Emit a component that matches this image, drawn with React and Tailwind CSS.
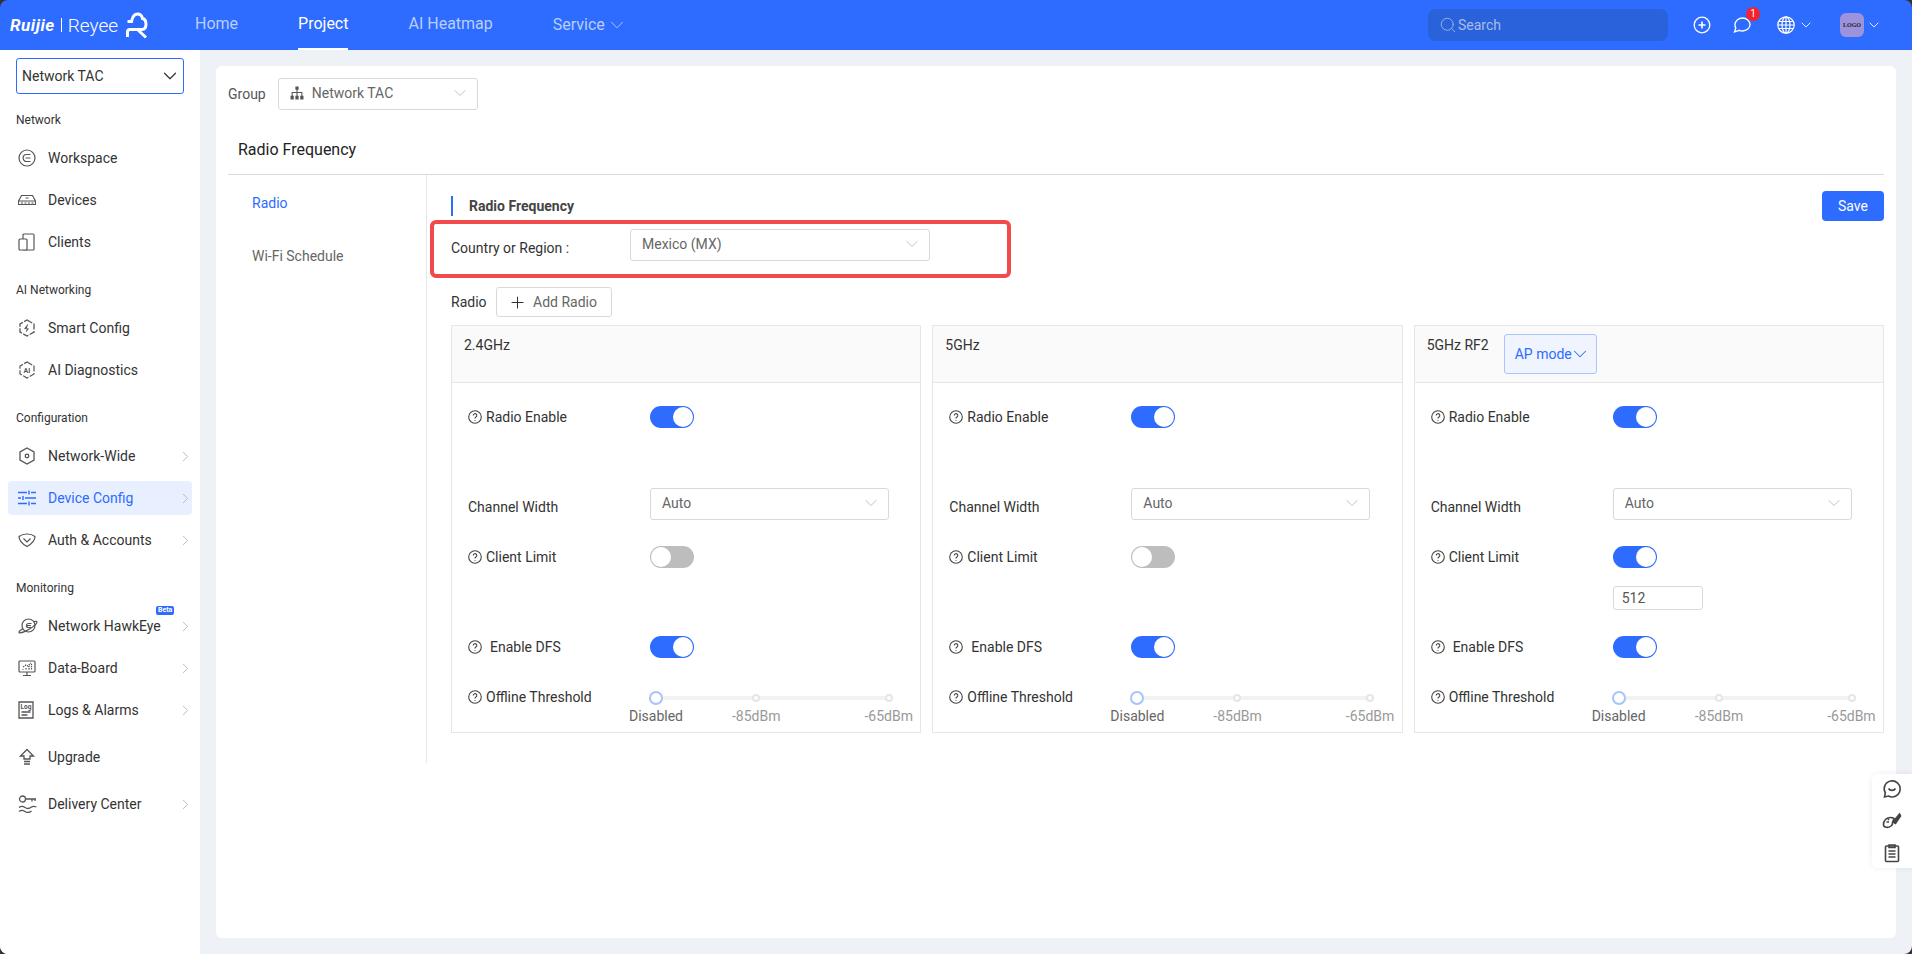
import { ChevronDown, ChevronRight, Plus, Search } from "lucide-react";

const font = "font-['Roboto','Liberation_Sans',sans-serif]";

const WorkspaceIcon = () => (
  <svg width="18" height="18" viewBox="0 0 18 18" fill="none" stroke="#555" strokeWidth="1.2">
    <circle cx="9" cy="9" r="8" />
    <path d="M12.5 5.5H8.6a3.5 3.5 0 0 0 0 7h3.9M7.5 9h5" />
  </svg>
);
const DevicesIcon = () => (
  <svg width="18" height="18" viewBox="0 0 18 18" fill="none" stroke="#555" strokeWidth="1.2">
    <path d="M3.5 4.5h11l3 5.5v3.5H.5V10z" />
    <path d="M.5 10h17M3 12h2M6.5 12h2M10 12h2M13.5 12h2M7.5 7h3" />
  </svg>
);
const ClientsIcon = () => (
  <svg width="18" height="18" viewBox="0 0 18 18" fill="none" stroke="#555" strokeWidth="1.2">
    <rect x="5" y="1" width="11" height="16" rx="1" />
    <rect x="1" y="6" width="8" height="11" rx="1" fill="#fff" />
    <path d="M5 14.5h.1M12 14.5h.1" />
  </svg>
);
const BoltIcon = () => (
  <svg width="18" height="18" viewBox="0 0 18 18" fill="none" stroke="#555" strokeWidth="1.3">
    <path d="M9 1l7 4v8l-7 4-7-4V5z" strokeDasharray="6 1.5" />
    <path d="M10 5L6.5 9.7h4L8 13" fill="#555" strokeWidth=".6" />
  </svg>
);
const AiIcon = () => (
  <svg width="18" height="18" viewBox="0 0 18 18" fill="none" stroke="#555" strokeWidth="1.2">
    <path d="M9 1l7 4v8l-7 4-7-4V5z" strokeDasharray="6 1.5" />
    <text x="9" y="11.7" textAnchor="middle" fontSize="7" fontWeight="700" fill="#555" stroke="none" fontFamily="Roboto">AI</text>
  </svg>
);
const HexIcon = () => (
  <svg width="18" height="18" viewBox="0 0 18 18" fill="none" stroke="#555" strokeWidth="1.3">
    <path d="M9 1l7 4v8l-7 4-7-4V5z" />
    <circle cx="9" cy="9" r="1.8" />
  </svg>
);
const SlidersIcon = () => (
  <svg width="18" height="18" viewBox="0 0 18 18" fill="none" stroke="#2e6bff" strokeWidth="1.4">
    <path d="M0 3.5h9M13 3.5h5M0 9h3M7 9h11M0 14.5h9M13 14.5h5" />
    <path d="M11 1.5v4M5 7v4M11 12.5v4" />
  </svg>
);
const ShieldIcon = () => (
  <svg width="18" height="18" viewBox="0 0 18 18" fill="none" stroke="#555" strokeWidth="1.2">
    <path d="M1 5.5C3.5 3.5 6 3 9 3s5.500.5 8 2.500c0 4-3.500 7.500-8 10-4.500-2.500-8-6-8-10z" />
    <path d="M5.500 7.500 9 11l3.500-3.500" />
  </svg>
);
const HawkIcon = () => (
  <svg width="20" height="18" viewBox="0 0 20 18" fill="none" stroke="#555" strokeWidth="1.2">
    <circle cx="10.500" cy="8.500" r="6.500" />
    <path d="M5 11.500C2 13.500.500 14.800 1 15.500c1 1 6-.700 10.500-3.500 4-2.500 7.500-5.500 7.500-7 0-.700-1-.900-3-.500" />
    <path d="M13.500 6.500h-3a2 2 0 0 0 0 4h3M9 8.500h4" />
  </svg>
);
const BoardIcon = () => (
  <svg width="18" height="18" viewBox="0 0 18 18" fill="none" stroke="#555" strokeWidth="1.2">
    <rect x="1" y="2" width="16" height="11" rx="1" />
    <path d="M9 13v3M5 16.500h8" />
    <path d="M4.500 10.500h1M8 10.500V8.500M11 10.500V7M13.500 10.500V5M5 8l3-2 2 1 3-3" strokeDasharray="1.500 .8" />
  </svg>
);
const LogIcon = () => (
  <svg width="16" height="18" viewBox="0 0 16 18" fill="none" stroke="#555" strokeWidth="1.300">
    <path d="M1 1h14v16H1z" />
    <text x="8" y="8" textAnchor="middle" fontSize="6.500" fontWeight="700" fill="#555" stroke="none" fontFamily="Roboto">Log</text>
    <path d="M3.500 11h9M3.500 14h6" />
  </svg>
);
const UpgradeIcon = () => (
  <svg width="18" height="18" viewBox="0 0 18 18" fill="none" stroke="#555" strokeWidth="1.300">
    <path d="M9 1.500l6.500 6.500H12v3H6V8H2.500z" />
    <path d="M6 13.500h6M6 16h6" />
  </svg>
);
const KeyIcon = () => (
  <svg width="20" height="18" viewBox="0 0 20 18" fill="none" stroke="#555" strokeWidth="1.300">
    <circle cx="4.500" cy="4" r="3" />
    <path d="M7.500 4H18M14 4v2.500M17 4v2" />
    <path d="M1 12.500c2-1.500 4-1.500 6 0s4.500 1 6.500-.5 3.500-.5 5 0M1 16.500c2-1.500 4-1.500 6 0s4.500 1 6.500-.5" />
  </svg>
);

const NavItem = ({ icon, label, arrow, active, badge }) => (
  <div className={`relative flex h-[34px] items-center rounded pl-[10px] text-[14px] ${active ? "bg-[#e8f0ff] text-[#2e6bff]" : "text-[#333]"}`}>
    <span className="flex w-[30px] shrink-0 items-center">{icon}</span>
    <span className="flex-1">{label}</span>
    {badge && (
      <span className="absolute left-[148px] top-[-3px] rounded-[2px] bg-[#2e6bff] px-[2px] text-[7px] leading-[9px] font-bold text-white">Beta</span>
    )}
    {arrow && <ChevronRight className="mr-[-2px]" size={17} color="#b5b5b5" strokeWidth={1.300} />}
  </div>
);

const groups = [
  {
    title: "Network",
    items: [
      { icon: <WorkspaceIcon />, label: "Workspace" },
      { icon: <DevicesIcon />, label: "Devices" },
      { icon: <ClientsIcon />, label: "Clients" },
    ],
  },
  {
    title: "AI Networking",
    items: [
      { icon: <BoltIcon />, label: "Smart Config" },
      { icon: <AiIcon />, label: "AI Diagnostics" },
    ],
  },
  {
    title: "Configuration",
    items: [
      { icon: <HexIcon />, label: "Network-Wide", arrow: true },
      { icon: <SlidersIcon />, label: "Device Config", arrow: true, active: true },
      { icon: <ShieldIcon />, label: "Auth & Accounts", arrow: true },
    ],
  },
  {
    title: "Monitoring",
    items: [
      { icon: <HawkIcon />, label: "Network HawkEye", arrow: true, badge: true },
      { icon: <BoardIcon />, label: "Data-Board", arrow: true },
      { icon: <LogIcon />, label: "Logs & Alarms", arrow: true },
    ],
  },
];

const Sidebar = () => (
  <aside className="w-[200px] shrink-0 bg-white px-[8px] pt-[8px]">
    <div className="mx-[8px] flex h-[36px] items-center justify-between rounded-[3px] border border-[#2e6bff] pl-[5px] pr-[2px] text-[14px] text-[#333]">
      Network TAC
      <ChevronDown size={22} color="#333" strokeWidth={1.300} />
    </div>
    <div className="mt-[15px] flex flex-col gap-[20px]">
      {groups.map((g) => (
        <div key={g.title}>
          <div className="mb-[12px] h-[20px] pl-[8px] text-[12px] leading-[22px] text-[#333]">{g.title}</div>
          <div className="flex flex-col gap-[8px]">
            {g.items.map((it) => (
              <NavItem key={it.label} {...it} />
            ))}
          </div>
        </div>
      ))}
      <div className="mt-[-7px] flex flex-col gap-[13px]">
        <NavItem icon={<UpgradeIcon />} label="Upgrade" />
        <NavItem icon={<KeyIcon />} label="Delivery Center" arrow />
      </div>
    </div>
  </aside>
);

const TopBar = () => (
  <header className="flex h-[50px] shrink-0 items-center bg-[#2e6bff] pl-[10px] pr-[30px]">
    <div className="flex w-[185px] items-center text-white">
      <span className="text-[17px] leading-none font-bold tracking-[0.5px] italic">Ruijie</span>
      <span className="ml-[6px] mr-[6px] h-[14px] w-px bg-white" />
      <span className="text-[19px] leading-none font-light">Reyee</span>
      <svg className="ml-[8px]" width="22" height="27" viewBox="0 0 22 27" fill="none" stroke="#fff" strokeWidth="3">
        <path d="M1.500 9.500H5.500C6.500 4.500 9 2 11.500 2c3 0 4.500 2 5 4.500 2 .5 3.500 2.500 3.500 5.500 0 3.500-1.500 5.500-4 5.500H4a2.500 2.500 0 0 0-2.500 2.500v5M12 18l8 7.500" />
      </svg>
    </div>
    <nav className="flex h-full text-[16px] text-[#b9cffc]">
      <span className="flex items-center pb-[2px]">Home</span>
      <span className="ml-[60px] flex items-center border-b-2 border-white text-white">Project</span>
      <span className="ml-[60px] flex items-center pb-[2px]">AI Heatmap</span>
      <span className="ml-[60px] flex items-center gap-[1px]">
        Service
        <ChevronDown size={22} strokeWidth={1} />
      </span>
    </nav>
    <div className="ml-auto flex h-[32px] w-[240px] items-center gap-[1px] rounded-[8px] bg-[#2a62dc] pl-[11px] text-[14px] text-[#a9bce6]">
      <Search size={18} strokeWidth={1.100} />
      Search
    </div>
    <svg className="ml-[25px]" width="18" height="18" viewBox="0 0 18 18" fill="none" stroke="#fff" strokeWidth="1.300">
      <circle cx="9" cy="9" r="7.800" />
      <path d="M9 5.500v7M5.500 9h7" strokeWidth="1.600" />
    </svg>
    <div className="relative ml-[22px] h-[18px] w-[18px]">
      <svg width="18" height="18" viewBox="0 0 18 18" fill="none" stroke="#fff" strokeWidth="1.300">
        <path d="M2 8.500C2 4.900 5.400 2 9.500 2S17 4.900 17 8.500 13.600 15 9.500 15c-1.200 0-2.300-.2-3.300-.7L1.500 16l1.300-4A6 6 0 0 1 2 8.500z" />
      </svg>
      <span className="absolute left-[13px] top-[-9px] flex h-[14px] w-[14px] items-center justify-center rounded-full bg-[#f5222d] text-[10px] leading-none text-white">1</span>
    </div>
    <svg className="ml-[26px]" width="18" height="18" viewBox="0 0 18 18" fill="none" stroke="#fff" strokeWidth="1.200">
      <circle cx="9" cy="9" r="8.200" />
      <ellipse cx="9" cy="9" rx="4" ry="8.200" />
      <path d="M9 .8v16.400M1.800 5.500h14.400M.8 9h16.400M1.800 12.500h14.400" />
    </svg>
    <ChevronDown className="ml-[3px]" size={16} color="#fff" strokeWidth={1.300} />
    <div className="ml-[26px] flex h-[24px] w-[24px] items-center justify-center rounded-[6px] bg-[#9d93dd] font-['Liberation_Serif',serif] text-[6px] font-bold text-[#222]">LOGO</div>
    <ChevronDown className="ml-[2px]" size={16} color="#fff" strokeWidth={1.300} />
  </header>
);

const Help = () => (
  <svg className="shrink-0" width="14" height="14" viewBox="0 0 14 14" fill="none" stroke="#444" strokeWidth="1.100">
    <circle cx="7" cy="7" r="6.300" />
    <path d="M5.200 5.500a1.800 1.800 0 1 1 2.700 1.500c-.6.400-.9.700-.9 1.400" />
    <path d="M7 10v.8" />
  </svg>
);

const Toggle = ({ on }) => (
  <div className={`flex h-[22px] w-[44px] items-center rounded-full ${on ? "justify-end bg-[#2e6bff] pr-[1px]" : "justify-start bg-[#bdbdbd] pl-[1px]"}`}>
    <span className="h-[20px] w-[20px] rounded-full bg-white" />
  </div>
);

const Select = ({ value, className }) => (
  <div className={`flex h-[32px] items-center justify-between rounded-[3px] border border-[#d9d9d9] pb-[2px] pl-[11px] pr-[7px] text-[14px] text-[#666] ${className}`}>
    <span>{value}</span>
    <ChevronDown size={20} color="#b5b5b5" strokeWidth={1} />
  </div>
);

const Row = ({ height, help = true, gap, label, children }) => (
  <div className={`flex pl-[16px] ${height}`}>
    <div className="flex h-[22px] w-[182px] shrink-0 items-center text-[14px] text-[#333]">
      {help && <Help />}
      <span className={gap}>{label}</span>
    </div>
    <div>{children}</div>
  </div>
);

const Slider = () => (
  <div className="relative mt-[10px] ml-[6px] h-[4px] w-[233px] rounded-full bg-[#f2f2f2]">
    <span className="absolute left-[-7px] top-[-5px] h-[14px] w-[14px] rounded-full border-2 border-[#a6c4fb] bg-white" />
    <span className="absolute left-[96px] top-[-2px] h-[8px] w-[8px] rounded-full border-2 border-[#e6e6e6] bg-white" />
    <span className="absolute right-[-4px] top-[-2px] h-[8px] w-[8px] rounded-full border-2 border-[#e6e6e6] bg-white" />
    <span className="absolute left-[-27px] top-[10px] text-[14px] text-[#666]">Disabled</span>
    <span className="absolute left-[76px] top-[10px] text-[14px] text-[#999]">-85dBm</span>
    <span className="absolute right-[-24px] top-[10px] text-[14px] text-[#999]">-65dBm</span>
  </div>
);

const RadioCard = ({ title, apMode, clientOn }) => (
  <div className="h-[408px] border border-[#e6e6e6]">
    <div className="flex h-[57px] gap-[15px] border-b border-[#e6e6e6] bg-[#fafafa] pl-[12px]">
      <span className="pt-[9px] text-[14px] text-[#333]">{title}</span>
      {apMode && (
        <div className="mt-[8px] flex h-[40px] w-[93px] items-center whitespace-nowrap rounded-[3px] border border-[#a9c4ff] bg-[#eff4ff] pl-[10px] text-[14px] text-[#2e6bff]">
          AP mode
          <ChevronDown className="ml-[-3px] shrink-0" size={22} strokeWidth={1.100} />
        </div>
      )}
    </div>
    <div className="pt-[23px]">
      <Row height="h-[82px]" label="Radio Enable" gap="ml-[4px]">
        <Toggle on />
      </Row>
      <Row height="h-[58px]" help={false} label="Channel Width" gap="mt-[16px]">
        <Select value="Auto" className="w-[239px]" />
      </Row>
      <Row height="h-[90px]" label="Client Limit" gap="ml-[4px]">
        <Toggle on={clientOn} />
        {clientOn && (
          <div className="mt-[18px] flex h-[24px] w-[90px] items-center rounded-[3px] border border-[#d9d9d9] pl-[8px] text-[14px] text-[#555]">512</div>
        )}
      </Row>
      <Row height="h-[50px]" label="Enable DFS" gap="ml-[8px]">
        <Toggle on />
      </Row>
      <Row height="h-[46px]" label="Offline Threshold" gap="ml-[4px]">
        <Slider />
      </Row>
    </div>
  </div>
);

export default function App() {
  return (
    <div className={`${font} h-[954px] w-[1912px] bg-[#333]`}>
      <div className="relative flex h-full flex-col overflow-hidden rounded-[8px]">
        <TopBar />
        <div className="flex flex-1 bg-[#eef2f6]">
          <Sidebar />
          <main className="flex-1 p-[16px]">
            <div className="relative h-full rounded-[6px] bg-white px-[12px]">
              <div className="flex items-center gap-[12px] pt-[12px] text-[14px] text-[#555]">
                Group
                <div className="flex h-[32px] w-[200px] items-center rounded-[3px] border border-[#d9d9d9] pb-[2px] pl-[11px] pr-[7px] text-[#666]">
                  <svg className="mr-[8px]" width="14" height="14" viewBox="0 0 13 13" fill="#555">
                    <path d="M5 .5h3v3H7v2h4.500V9h1v3.500h-3V9h1V6.500H7V9h1v3.500H5V9h1V6.500H2.500V9h1v3.500h-3V9h1V5.500H6v-2H5z" />
                  </svg>
                  <span className="flex-1">Network TAC</span>
                  <ChevronDown size={20} color="#b5b5b5" strokeWidth={1} />
                </div>
              </div>
              <div className="mt-[30px] h-[35px] border-b border-[#d9d9d9] pl-[10px] text-[16px] leading-[19px] text-[#222]">Radio Frequency</div>
              <div className="flex">
                <div className="h-[588px] w-[199px] shrink-0 border-r border-[#e6e6e6] pl-[24px] text-[14px]">
                  <div className="pt-[18px] text-[#2e6bff]">Radio</div>
                  <div className="pt-[32px] text-[#666]">Wi-Fi Schedule</div>
                </div>
                <div className="flex-1 pl-[24px]">
                  <div className="mt-[16px] flex items-start justify-between">
                    <div className="mt-[5px] h-[20px] border-l-2 border-[#2e6bff] pl-[16px] text-[14px] leading-[20px] font-bold text-[#444]">Radio Frequency</div>
                    <button className="h-[30px] w-[62px] rounded-[4px] bg-[#2e6bff] text-[14px] text-white">Save</button>
                  </div>
                  <div className="mt-[8px] flex h-[32px] items-center text-[14px] text-[#333]">
                    <span className="w-[179px] pt-[6px]">Country or Region :</span>
                    <Select value="Mexico (MX)" className="w-[300px]" />
                  </div>
                  <div className="mt-[26px] flex h-[30px] items-center gap-[9px] text-[14px] text-[#333]">
                    Radio
                    <div className="flex h-[30px] w-[116px] items-center justify-center gap-[6px] rounded-[3px] border border-[#d9d9d9] pr-[2px] text-[#666]">
                      <Plus size={19} color="#333" strokeWidth={1.300} />
                      Add Radio
                    </div>
                  </div>
                  <div className="mt-[8px] grid grid-cols-3 gap-[11px]">
                    <RadioCard title="2.4GHz" />
                    <RadioCard title="5GHz" />
                    <RadioCard title="5GHz RF2" apMode clientOn />
                  </div>
                </div>
              </div>
              {/* red annotation around the country select */}
              <div className="absolute left-[214px] top-[154px] h-[58px] w-[581px] rounded-[6px] border-4 border-[#f04a4a]" />
            </div>
          </main>
        </div>
        <div className="absolute left-[1872px] top-[774px] flex h-[94px] w-[40px] flex-col items-center justify-between rounded-l-[6px] bg-white py-[5px] shadow-[0_0_6px_rgba(0,0,0,0.08)]">
          <svg width="20" height="20" viewBox="0 0 20 20" fill="none" stroke="#444" strokeWidth="1.600">
            <path d="M2.500 18l.8-4A8 8 0 1 1 6.500 17z" />
            <path d="M6.500 9.500c1.500 2.500 5.500 2.500 7 0" />
          </svg>
          <svg width="20" height="20" viewBox="0 0 20 20" fill="none" stroke="#444" strokeWidth="1.600">
            <path d="M1.500 13.500c0-4 3-7 7-7 1.500 0 2.500.3 3.500 1l-1.500 4c.3 1.200-.3 2.500-1.500 3.500-2.500 2-7.500 2-7.500-1.500z" />
            <path d="M11 11l6.500-8 1 2-5 7.500z" fill="#444" />
            <path d="M4.500 11h2.500M6 8l1 1" />
          </svg>
          <svg width="20" height="20" viewBox="0 0 20 20" fill="none" stroke="#444" strokeWidth="1.600">
            <rect x="3.500" y="3" width="13" height="15.500" rx="1" />
            <path d="M7 2h6v2.500H7zM6.500 8h7M6.500 11h7M6.500 14h7" />
          </svg>
        </div>
      </div>
    </div>
  );
}
